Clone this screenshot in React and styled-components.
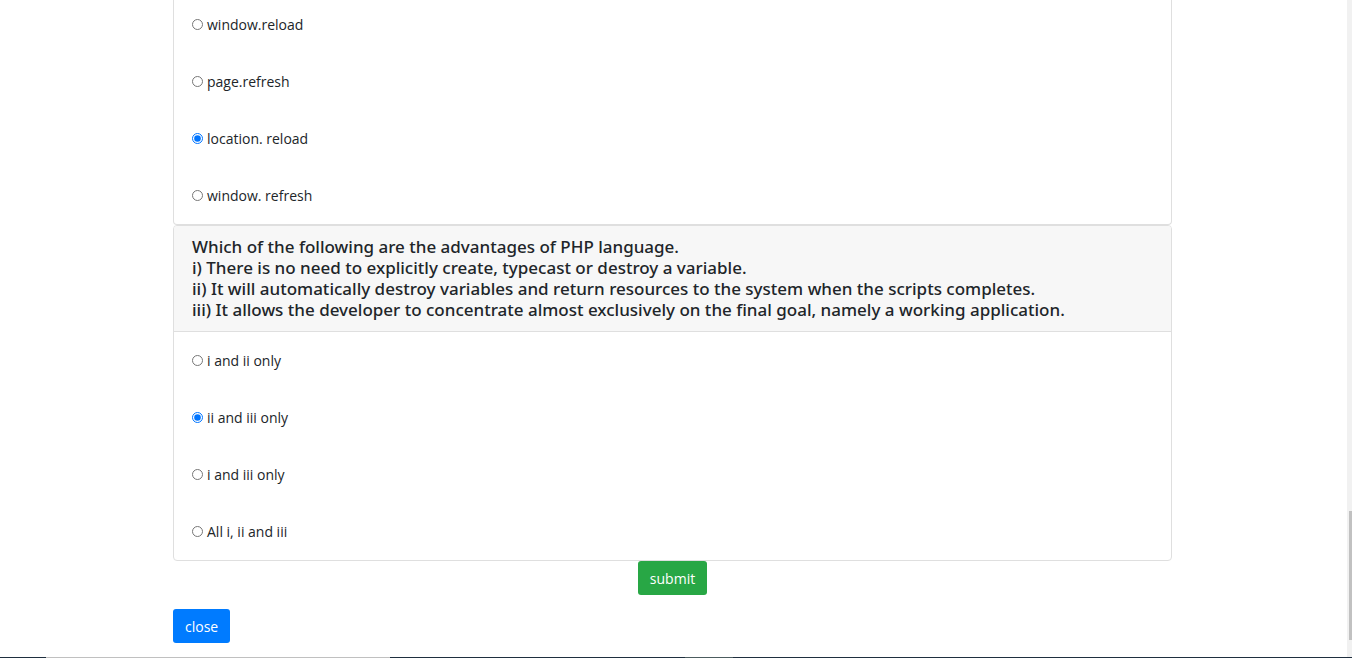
import React from "react";
import styled, { createGlobalStyle } from "styled-components";

const GlobalStyle = createGlobalStyle`
  *, *::before, *::after { box-sizing: border-box; }
  body {
    margin: 0;
    background: #fff;
    color: #212529;
    font-family: "Segoe UI", "Open Sans", "Noto Sans", sans-serif;
    font-size: 14px;
    line-height: 21px;
  }
`;

const Page = styled.div`
  display: flex;
  flex-direction: column;
  min-height: 100vh;
`;

const Viewport = styled.div`
  display: flex;
  flex: 1;
`;

const Content = styled.main`
  flex: 1;
  min-width: 0;
`;

const Container = styled.form`
  max-width: 999px;
  margin: 0 auto;
  padding-bottom: 14px;
`;

const Card = styled.section`
  border: 1px solid #dfdfdf;
  border-top-width: ${(p) => (p.$continued ? "0" : "1px")};
  border-radius: ${(p) => (p.$continued ? "0 0 4px 4px" : "4px")};
  background: #fff;
`;

const CardHeader = styled.header`
  padding: 10px 18px 11px;
  border-bottom: 1px solid #dfdfdf;
  border-radius: 3px 3px 0 0;
  background: #f7f7f7;
`;

const Question = styled.h5`
  margin: 0;
  font-family: "Segoe UI", "Noto Sans", sans-serif;
  font-size: 17px;
  font-weight: 500;
  line-height: 21px;
  white-space: pre-line;
`;

const Options = styled.div`
  display: flex;
  flex-direction: column;
  align-items: flex-start;
  gap: 36px;
  padding: ${(p) => (p.$continued ? "14px" : "18px")} 18px 18px;
`;

const Option = styled.label`
  display: flex;
  align-items: center;
  gap: 4px;
`;

const Radio = styled.input`
  width: 11px;
  height: 11px;
  margin: 0;
`;

const Button = styled.button`
  height: 34px;
  padding: 0 12px;
  border: 0;
  border-radius: 3px;
  background: ${(p) => p.$color};
  color: #fff;
  font: inherit;
  cursor: pointer;
`;

const SubmitRow = styled.div`
  display: flex;
  justify-content: center;
  margin-bottom: 14px;
`;

const ScrollTrack = styled.div`
  display: flex;
  flex-direction: column;
  width: 7px;
  padding-bottom: 17px;
  border-left: 2px solid #fff;
  background: #f1f1f1;
`;

const ScrollThumb = styled.div`
  width: 3px;
  height: 129px;
  margin-top: auto;
  margin-left: auto;
  background: #c1c1c1;
`;

const Taskbar = styled.footer`
  display: flex;
  height: 1px;
  background: #1f2f3f;
`;

const TaskbarItem = styled.span`
  width: ${(p) => p.$width}px;
  background: ${(p) => p.$color};
`;

function OptionList({ name, items, selected, continued }) {
  return (
    <Options $continued={continued}>
      {items.map((text) => (
        <Option key={text}>
          <Radio type="radio" name={name} value={text} defaultChecked={text === selected} />
          {text}
        </Option>
      ))}
    </Options>
  );
}

const phpQuestion = `Which of the following are the advantages of PHP language.
i) There is no need to explicitly create, typecast or destroy a variable.
ii) It will automatically destroy variables and return resources to the system when the scripts completes.
iii) It allows the developer to concentrate almost exclusively on the final goal, namely a working application.`;

export default function App() {
  return (
    <>
      <GlobalStyle />
      <Page>
        <Viewport>
          <Content>
            <Container onSubmit={(e) => e.preventDefault()}>
              <Card $continued>
                <OptionList
                  continued
                  name="reload"
                  items={["window.reload", "page.refresh", "location. reload", "window. refresh"]}
                  selected="location. reload"
                />
              </Card>
              <Card>
                <CardHeader>
                  <Question>{phpQuestion}</Question>
                </CardHeader>
                <OptionList
                  name="php"
                  items={["i and ii only", "ii and iii only", "i and iii only", "All i, ii and iii"]}
                  selected="ii and iii only"
                />
              </Card>
              <SubmitRow>
                <Button type="submit" $color="#28a745">submit</Button>
              </SubmitRow>
              <Button type="button" $color="#007bff">close</Button>
            </Container>
          </Content>
          <ScrollTrack>
            <ScrollThumb />
          </ScrollTrack>
        </Viewport>
        <Taskbar>
          <TaskbarItem $width={46} />
          <TaskbarItem $width={344} $color="#c0c0c0" />
          <TaskbarItem $width={295} />
          <TaskbarItem $width={48} $color="#4c5c5f" />
        </Taskbar>
      </Page>
    </>
  );
}
